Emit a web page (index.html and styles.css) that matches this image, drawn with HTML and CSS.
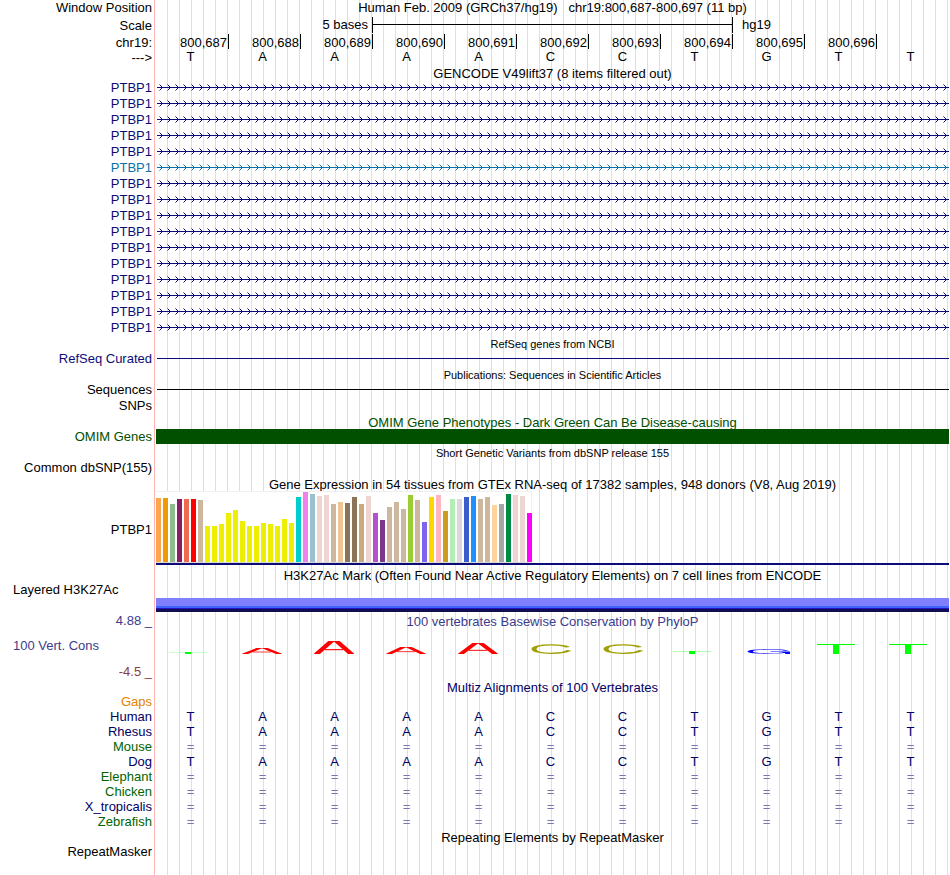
FILE: index.html
```html
<!DOCTYPE html>
<html lang="en">
<head>
  <meta charset="UTF-8">
  <meta name="viewport" content="width=device-width, initial-scale=1.0">
  <title>Human chr19:800,687-800,697</title>
  <link rel="stylesheet" href="styles.css">
</head>
<body>

  <!-- shared shapes -->
  <svg class="defs" aria-hidden="true">
    <defs>
      <pattern id="strandNavy" width="8" height="16" patternUnits="userSpaceOnUse">
        <path d="M0 7h8v1h-8z M4 6h1v3h-1z M3 5h1v1h-1z M3 9h1v1h-1z" fill="#0c0c78"/>
        <path d="M2 4h1v1h-1z M2 10h1v1h-1z" fill="#8585bb"/>
      </pattern>
      <pattern id="strandBlue" width="8" height="16" patternUnits="userSpaceOnUse">
        <path d="M0 7h8v1h-8z M4 6h1v3h-1z M3 5h1v1h-1z M3 9h1v1h-1z" fill="#0c70aa"/>
        <path d="M2 4h1v1h-1z M2 10h1v1h-1z" fill="#85b7d4"/>
      </pattern>
      <symbol id="markA" viewBox="0 0 40 12" preserveAspectRatio="none">
        <g stroke="#f00" fill="none">
          <line x1="-1" y1="15" x2="20" y2="-2" stroke-width="4"/>
          <line x1="20" y1="-2" x2="41" y2="15" stroke-width="4"/>
          <line x1="11" y1="8" x2="29" y2="8" stroke-width="1"/>
        </g>
      </symbol>
      <symbol id="markC" viewBox="0 0 40 40" preserveAspectRatio="none">
        <path d="M37 13C34 6 28 3 20 3C10 3 3 9 3 20C3 31 10 37 20 37C29 37 36 33 38 25" stroke="#a0a000" stroke-width="5" fill="none"/>
      </symbol>
      <symbol id="markG" viewBox="0 0 40 40" preserveAspectRatio="none">
        <path d="M37 13C34 6 28 4 20 4C10 4 3 9 3 20C3 31 10 36 20 36C28 36 34 33 37 22H22M38 22V40" stroke="#00f" stroke-width="5" fill="none"/>
      </symbol>
      <symbol id="markT" viewBox="0 0 38 10" preserveAspectRatio="none">
        <rect width="38" height="1" fill="#0f0"/>
        <rect x="16" width="6" height="10" fill="#0f0"/>
      </symbol>
    </defs>
  </svg>

  <main class="tracks">

    <div class="row">
      <div class="label">Window Position</div>
      <h1 class="title">Human Feb. 2009 (GRCh37/hg19) &nbsp; chr19:800,687-800,697 (11 bp)</h1>
    </div>
    <div class="row scale-row">
      <div class="label">Scale</div>
      <div class="bases">
        <span class="scale-size">5 bases</span>
        <span class="scale-bar"></span>
        <span class="scale-db">hg19</span>
      </div>
    </div>
    <div class="row">
      <div class="label chrom">chr19:</div>
      <div class="bases ruler" id="ruler"></div>
    </div>
    <div class="row short">
      <div class="label">---&gt;</div>
      <div class="bases sequence" id="sequence"></div>
    </div>

    <h2 class="title">GENCODE V49lift37 (8 items filtered out)</h2>
    <div id="genes"></div>

    <h2 class="title small">RefSeq genes from NCBI</h2>
    <div class="row navy">
      <div class="label">RefSeq Curated</div>
      <div class="thin-line"></div>
    </div>

    <h2 class="title small">Publications: Sequences in Scientific Articles</h2>
    <div class="row">
      <div class="label">Sequences</div>
      <div class="thin-line"></div>
    </div>
    <div class="row">
      <div class="label">SNPs</div>
    </div>

    <h2 class="title green">OMIM Gene Phenotypes - Dark Green Can Be Disease-causing</h2>
    <div class="row green">
      <div class="label">OMIM Genes</div>
      <div class="omim-bar"></div>
    </div>

    <h2 class="title small">Short Genetic Variants from dbSNP release 155</h2>
    <div class="row">
      <div class="label">Common dbSNP(155)</div>
    </div>

    <h2 class="title">Gene Expression in 54 tissues from GTEx RNA-seq of 17382 samples, 948 donors (V8, Aug 2019)</h2>
    <div class="row gtex">
      <div class="label">PTBP1</div>
      <div class="gtex-data">
        <div class="gtex-chart" id="gtex"></div>
      </div>
    </div>

    <h2 class="title">H3K27Ac Mark (Often Found Near Active Regulatory Elements) on 7 cell lines from ENCODE</h2>
    <div class="row h3k">
      <div class="label left">Layered H3K27Ac</div>
      <div class="h3k-band"></div>
    </div>

    <div class="row short phylop">
      <div class="label">4.88 _</div>
      <h2 class="title">100 vertebrates Basewise Conservation by PhyloP</h2>
    </div>
    <div class="row cons phylop">
      <div class="label left">100 Vert. Cons</div>
      <div class="bases logo" id="logo"></div>
    </div>
    <div class="row short">
      <div class="label minimum">-4.5 _</div>
    </div>

    <h2 class="title dark">Multiz Alignments of 100 Vertebrates</h2>
    <table class="multiz">
      <tbody id="multiz"></tbody>
    </table>

    <h2 class="title">Repeating Elements by RepeatMasker</h2>
    <div class="row">
      <div class="label">RepeatMasker</div>
    </div>

  </main>

  <script>
    const bases = "TAAAACCTGTT";

    // position ruler and reference bases
    const ruler = document.getElementById("ruler");
    for (let pos = 687; pos <= 696; pos++) {
      ruler.innerHTML += `<span>800,${pos}</span>`;
    }
    document.getElementById("sequence").innerHTML =
      [...bases].map(b => `<span>${b}</span>`).join("");

    // 16 transcripts, the sixth one is drawn in light blue
    let genes = "";
    for (let i = 0; i < 16; i++) {
      const blue = i === 5;
      genes += `<div class="row ${blue ? "blue" : "navy"}">
        <div class="label">PTBP1</div>
        <svg class="strand" aria-hidden="true"><rect width="100%" height="16" fill="url(#${blue ? "strandBlue" : "strandNavy"})"/></svg>
      </div>`;
    }
    document.getElementById("genes").innerHTML = genes;

    // [colour, height] for each tissue
    const tissues = [
      ["#ffa54f", 64], ["#ee9a00", 64], ["#8fbc8f", 58], ["#8b1c62", 63], ["#ee6a50", 63], ["#ff0000", 63],
      ["#cdb79e", 62], ["#eeee00", 36], ["#eeee00", 36], ["#eeee00", 38], ["#eeee00", 49], ["#eeee00", 52],
      ["#eeee00", 41], ["#eeee00", 36], ["#eeee00", 36], ["#eeee00", 39], ["#eeee00", 38], ["#eeee00", 36],
      ["#eeee00", 43], ["#eeee00", 39], ["#00cdcd", 65], ["#ee82ee", 70], ["#9ac0cd", 68], ["#eed5d2", 66],
      ["#eed5d2", 67], ["#cdb79e", 58], ["#eec591", 60], ["#8b7355", 59], ["#8b7355", 65], ["#cdaa7d", 58],
      ["#eed5d2", 66], ["#b452cd", 49], ["#7a378b", 42], ["#cdb79e", 55], ["#cdb79e", 60], ["#cdb79e", 53],
      ["#9acd32", 67], ["#cdb79e", 62], ["#7a67ee", 40], ["#ffd700", 65], ["#ffb6c1", 67], ["#cd9b1d", 51],
      ["#b4eeb4", 63], ["#d9d9d9", 63], ["#3a5fcd", 65], ["#1e90ff", 66], ["#cdb79e", 63], ["#cdb79e", 65],
      ["#ffd39b", 57], ["#a6a6a6", 58], ["#008b45", 68], ["#eed5d2", 67], ["#eed5d2", 66], ["#ff00ff", 49]
    ];
    document.getElementById("gtex").innerHTML = tissues
      .map(([color, h]) => `<i style="height:${h}px;background:${color}"></i>`).join("");

    // conservation score as mark height
    const scores = [2, 6, 13, 7, 11, 10, 10, 3, 5, 10, 10];
    document.getElementById("logo").innerHTML = scores
      .map((h, i) => `<svg class="mark mark-${bases[i].toLowerCase()}" height="${h}" role="img" aria-label="${bases[i]}"><use href="#mark${bases[i]}" width="100%" height="100%"/></svg>`)
      .join("");

    const species = [
      ["Gaps", "orange", false],
      ["Human", "dark", true],
      ["Rhesus", "dark", true],
      ["Mouse", "leaf", false],
      ["Dog", "dark", true],
      ["Elephant", "leaf", false],
      ["Chicken", "leaf", false],
      ["X_tropicalis", "dark", false],
      ["Zebrafish", "leaf", false]
    ];
    document.getElementById("multiz").innerHTML = species.map(([name, color, aligned]) => {
      const cells = [...bases].map(b => {
        if (name === "Gaps") return "<td></td>";
        return aligned ? `<td>${b}</td>` : `<td class="gap">=</td>`;
      }).join("");
      return `<tr><th scope="row" class="${color}">${name}</th>${cells}</tr>`;
    }).join("");
  </script>

</body>
</html>
```
FILE: styles.css
```css
:root {
  --label-width: 156px;
  --navy: #0c0c78;
  --green: #005000;
  --dark: #000064;
}

* {
  box-sizing: border-box;
}

body {
  margin: 0;
  padding-right: 1px;
  font-family: "Liberation Sans", Arial, sans-serif;
  font-size: 13px;
  line-height: 15px;
  color: #000;
  background: #fff;
}

.defs {
  position: absolute;
  width: 0;
  height: 0;
}

/* pink divider after the labels, pale guides over the data */
.tracks {
  min-height: 100vh;
  background-image:
    linear-gradient(#ffb4b4, #ffb4b4),
    repeating-linear-gradient(to right, transparent 0 11px, #dcdcfa 11px 12px);
  background-position: 154px 0, var(--label-width) 0;
  background-size: 1px 100%, 100% 100%;
  background-repeat: no-repeat;
}

.row {
  display: grid;
  grid-template-columns: var(--label-width) 1fr;
  height: 16px;
}

.row.short {
  height: 15px;
}

.label {
  padding-right: 4px;
  text-align: right;
  white-space: nowrap;
}

.label.left {
  padding-left: 13px;
  text-align: left;
}

.title {
  height: 15px;
  margin: 0 0 0 var(--label-width);
  font-size: 13px;
  font-weight: normal;
  line-height: 17px;
  text-align: center;
  white-space: nowrap;
}

.row .title {
  margin-left: 0;
}

h1.title {
  line-height: 15px;
}

.title.small {
  font-size: 11px;
}

.navy { color: var(--navy); }
.blue { color: #0c70aa; }
.green { color: var(--green); }
.leaf { color: #006400; }
.dark { color: var(--dark); }
.orange { color: #e68200; }

/* one column for each base */
.bases {
  display: grid;
  grid-template-columns: repeat(11, 1fr);
  margin-left: 1px;
}

.scale-row {
  height: 18px;
  padding: 1px 0 2px;
}

.scale-row .label {
  padding-top: 1px;
}

.scale-size {
  grid-column: span 3;
  padding-right: 4px;
  border-right: 1px solid #000;
  text-align: right;
}

.scale-bar {
  grid-column: span 5;
  border-right: 1px solid #000;
  background: linear-gradient(#000, #000) 0 7px / 100% 1px no-repeat;
}

.scale-db {
  padding-left: 9px;
}

.chrom {
  padding-top: 1px;
}

.ruler span {
  height: 15px;
  padding: 1px 1px 0 0;
  border-right: 1px solid #000;
  text-align: right;
}

.sequence span {
  padding-right: 5px;
  line-height: 13px;
  text-align: center;
}

.strand {
  display: block;
  width: calc(100% - 1px);
  height: 16px;
  margin-left: 1px;
}

.thin-line {
  height: 1px;
  margin: 7px 0 0 1px;
  background: currentColor;
}

.omim-bar {
  height: 15px;
  background: var(--green);
}

.row.gtex {
  height: 76px;
}

.gtex .label {
  align-self: center;
}

.gtex-data {
  height: 74px;
  border-bottom: 2px solid var(--navy);
}

.gtex-chart {
  display: flex;
  align-items: flex-end;
  gap: 2px;
  width: max-content;
  height: 72px;
  padding-bottom: 1px;
  background: #fff;
  box-shadow: inset -1px 1px #f0f0f0, inset 0 -1px #d8d8d8;
}

.gtex-chart i {
  width: 5px;
}

.row.h3k {
  height: 31px;
}

.h3k-band {
  height: 14px;
  margin-top: 16px;
  background: linear-gradient(#8080ff 0 8px, #4064ff 8px 10px, #2814c8 10px 11px, #120c50 11px 14px);
}

.phylop {
  color: #3c3c8c;
}

.minimum {
  color: #8c3c3c;
}

.row.cons {
  height: 36px;
}

.cons .label {
  padding-top: 10px;
}

.logo {
  align-items: end;
  justify-items: center;
  padding-bottom: 10px;
}

.mark {
  display: block;
  width: 40px;
  margin-right: 6px;
}

.mark-c {
  margin-right: 4px;
}

.mark-g {
  width: 43px;
  margin-right: 2px;
}

.mark-t {
  width: 38px;
  margin-right: 10px;
}

.multiz {
  width: 100%;
  border-collapse: collapse;
  table-layout: fixed;
  color: var(--dark);
}

.multiz th {
  width: 157px;
  padding: 0 5px 0 0;
  font-weight: normal;
  text-align: right;
}

.multiz td {
  height: 15px;
  padding: 0 5px 0 0;
  text-align: center;
}

.multiz .gap {
  color: #7878b0;
}
```
